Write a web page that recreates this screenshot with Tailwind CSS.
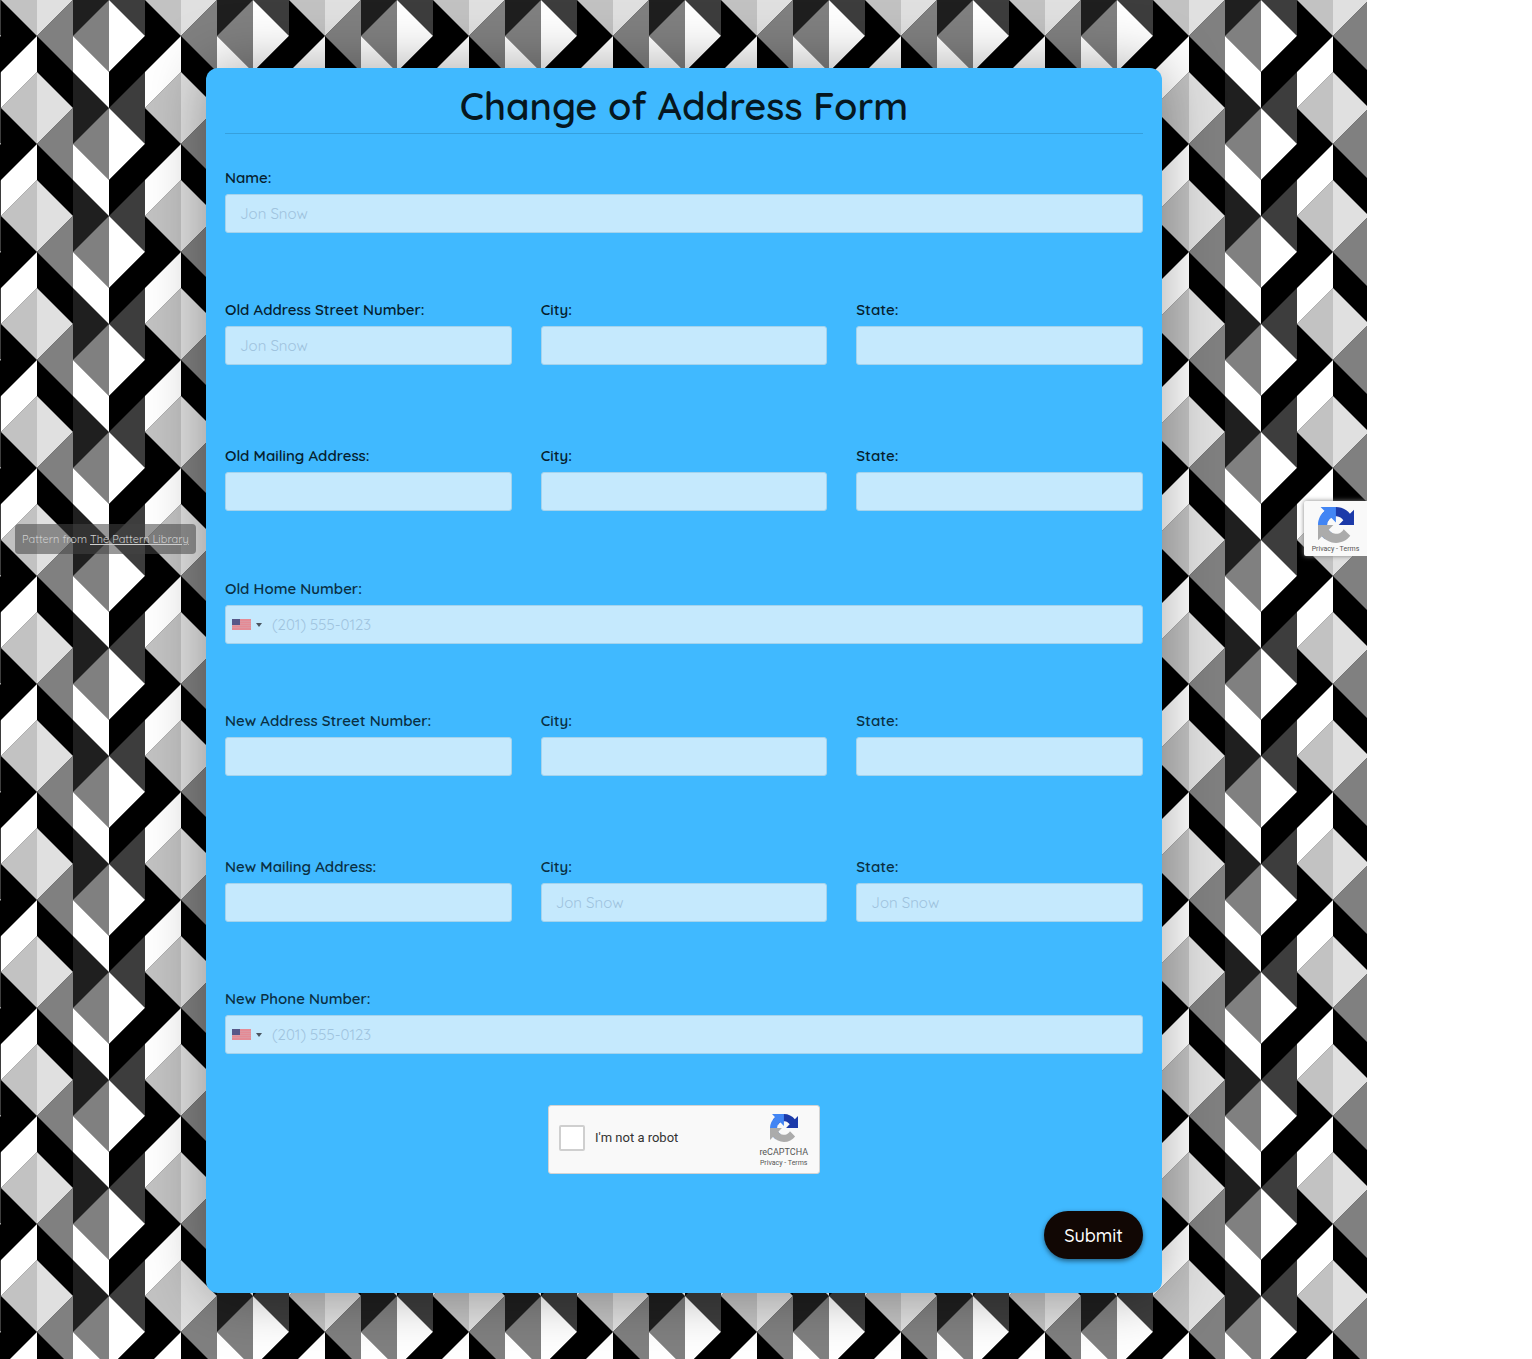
<!DOCTYPE html>
<html lang="en">
  <head>
    <meta charset="UTF-8" />
    <meta name="viewport" content="width=device-width, initial-scale=1.0" />
    <script src="https://cdn.jsdelivr.net/npm/@tailwindcss/browser@4"></script>
    <title>Change of Address Form</title>
  </head>
  <body class="bg-white font-[Quicksand,Lato,sans-serif] text-[#06202e]">
    <!-- Shared drawings -->
    <svg class="hidden" aria-hidden="true">
      <symbol id="recaptcha" viewBox="0 0 64 64">
        <path
          fill="#1c3aa9"
          d="M64 31.955l-.033-1.37V4.687l-7.16 7.16C50.948 4.674 42.033.093 32.05.093c-10.4 0-19.622 4.96-25.458 12.64l11.736 11.86a15.55 15.55 0 0 1 4.754-5.334c2.05-1.6 4.952-2.906 8.968-2.906.485 0 .86.057 1.135.163 4.976.393 9.288 3.14 11.828 7.124l-8.307 8.307L64 31.953"
        />
        <path
          fill="#4285f4"
          d="M31.862.094l-1.37.033H4.594l7.16 7.16C4.58 13.147 0 22.06 0 32.046c0 10.4 4.96 19.622 12.64 25.458L24.5 45.768a15.56 15.56 0 0 1-5.334-4.754c-1.6-2.05-2.906-4.952-2.906-8.968 0-.485.057-.86.163-1.135.393-4.976 3.14-9.288 7.124-11.828l8.307 8.307L31.86.095"
        />
        <path
          fill="#ababab"
          d="M.001 32.045l.033 1.37v25.898l7.16-7.16c5.86 7.173 14.774 11.754 24.76 11.754 10.4 0 19.622-4.96 25.458-12.64l-11.736-11.86a15.55 15.55 0 0 1-4.754 5.334c-2.05 1.6-4.952 2.906-8.968 2.906-.485 0-.86-.057-1.135-.163-4.976-.393-9.288-3.14-11.828-7.124l8.307-8.307c-10.522.04-22.4.066-27.295-.005"
        />
      </symbol>
      <symbol id="flag-us" viewBox="0 0 19 11">
        <path fill="#e48b95" d="M0 0h19v11H0z" />
        <path stroke="#dc9aa5" stroke-width=".8" d="M0 2.5h19M0 4.5h19M0 6.5h19M0 8.5h19" />
        <path fill="#585789" d="M0 0h8v6H0z" />
      </symbol>
    </svg>

    <div class="relative isolate mr-[165px] min-h-screen overflow-hidden pt-[68px] pb-[66px] pl-[206px] pr-[205px]">
      <!-- Background pattern -->
      <svg class="absolute inset-0 -z-10 h-full w-full" aria-hidden="true">
        <defs>
          <pattern id="chevrons" x="1" width="144" height="108" patternUnits="userSpaceOnUse">
            <path fill="#000" d="M0 0h73v108H0z" />
            <path fill="#c2c2c2" d="M0 0h36v36zM36 72v36H0z" />
            <path fill="#fff" d="M36 36v36L0 108V72z" />
            <path fill="#e0e0e0" d="M36 0h36L36 36zM36 72l36 36H36z" />
            <path fill="#808080" d="M72 0v72L36 36z" />
            <path fill="#1f1f1f" d="M72 0h37v108H72z" />
            <path fill="#808080" d="M108 0v72L72 36z" />
            <path fill="#fff" d="M72 36l36 36v36L72 72z" />
            <path fill="#3d3d3d" d="M108 0h36v108h-36z" />
            <path fill="#fff" d="M108 0l36 36-36 36z" />
            <path fill="#000" d="M144 36v36l-36 36V72z" />
          </pattern>
        </defs>
        <rect width="100%" height="100%" fill="url(#chevrons)" />
      </svg>

      <!-- Form card -->
      <form class="rounded-xl bg-[#40b9ff] px-[19px] pt-4 pb-[34px] shadow-[0_0_60px_rgba(0,0,0,0.36)]">
        <h1 class="border-b border-[#36a0dd] pb-[5px] text-center text-[38px]/[44px] font-semibold text-[#061720]">
          Change of Address Form
        </h1>

        <div class="mt-[33px]">
          <label for="name" class="mb-[5px] block text-[15px]/[22px] font-semibold">Name:</label>
          <input id="name" type="text" placeholder="Jon Snow" class="h-[39px] w-full rounded-[3px] border border-[#a5d3ec] bg-[#c5e9fd] px-[14px] text-[15px] placeholder:text-[#9fc3de]" />
        </div>

        <!-- Old address -->
        <div class="mt-[66px] grid grid-cols-3 gap-[29px]">
          <div>
            <label for="old-street" class="mb-[5px] block text-[15px]/[22px] font-semibold">Old Address Street Number:</label>
            <input id="old-street" type="text" placeholder="Jon Snow" class="h-[39px] w-full rounded-[3px] border border-[#a5d3ec] bg-[#c5e9fd] px-[14px] text-[15px] placeholder:text-[#9fc3de]" />
          </div>
          <div>
            <label for="old-city" class="mb-[5px] block text-[15px]/[22px] font-semibold">City:</label>
            <input id="old-city" type="text" class="h-[39px] w-full rounded-[3px] border border-[#a5d3ec] bg-[#c5e9fd] px-[14px] text-[15px]" />
          </div>
          <div>
            <label for="old-state" class="mb-[5px] block text-[15px]/[22px] font-semibold">State:</label>
            <input id="old-state" type="text" class="h-[39px] w-full rounded-[3px] border border-[#a5d3ec] bg-[#c5e9fd] px-[14px] text-[15px]" />
          </div>
        </div>

        <div class="mt-20 grid grid-cols-3 gap-[29px]">
          <div>
            <label for="old-mail" class="mb-[5px] block text-[15px]/[22px] font-semibold">Old Mailing Address:</label>
            <input id="old-mail" type="text" class="h-[39px] w-full rounded-[3px] border border-[#a5d3ec] bg-[#c5e9fd] px-[14px] text-[15px]" />
          </div>
          <div>
            <label for="old-mail-city" class="mb-[5px] block text-[15px]/[22px] font-semibold">City:</label>
            <input id="old-mail-city" type="text" class="h-[39px] w-full rounded-[3px] border border-[#a5d3ec] bg-[#c5e9fd] px-[14px] text-[15px]" />
          </div>
          <div>
            <label for="old-mail-state" class="mb-[5px] block text-[15px]/[22px] font-semibold">State:</label>
            <input id="old-mail-state" type="text" class="h-[39px] w-full rounded-[3px] border border-[#a5d3ec] bg-[#c5e9fd] px-[14px] text-[15px]" />
          </div>
        </div>

        <div class="mt-[67px]">
          <label for="old-phone" class="mb-[5px] block text-[15px]/[22px] font-semibold text-[#0a2f43]">Old Home Number:</label>
          <div class="relative">
            <input id="old-phone" type="tel" placeholder="(201) 555-0123" class="h-[39px] w-full rounded-[3px] border border-[#a5d3ec] bg-[#c5e9fd] pl-[46px] text-[15px] placeholder:text-[#9fc3de]" />
            <button type="button" aria-label="Country" class="absolute inset-y-0 left-0 flex items-center gap-[5px] pl-[7px]">
              <svg class="h-[11px] w-[19px]"><use href="#flag-us" /></svg>
              <svg class="h-1 w-[6px] fill-[#4a5560]" viewBox="0 0 6 4"><path d="M0 0h6L3 4z" /></svg>
            </button>
          </div>
        </div>

        <!-- New address -->
        <div class="mt-[66px] grid grid-cols-3 gap-[29px] text-[#0a2f43]">
          <div>
            <label for="new-street" class="mb-[5px] block text-[15px]/[22px] font-semibold">New Address Street Number:</label>
            <input id="new-street" type="text" class="h-[39px] w-full rounded-[3px] border border-[#a5d3ec] bg-[#c5e9fd] px-[14px] text-[15px]" />
          </div>
          <div>
            <label for="new-city" class="mb-[5px] block text-[15px]/[22px] font-semibold">City:</label>
            <input id="new-city" type="text" class="h-[39px] w-full rounded-[3px] border border-[#a5d3ec] bg-[#c5e9fd] px-[14px] text-[15px]" />
          </div>
          <div>
            <label for="new-state" class="mb-[5px] block text-[15px]/[22px] font-semibold">State:</label>
            <input id="new-state" type="text" class="h-[39px] w-full rounded-[3px] border border-[#a5d3ec] bg-[#c5e9fd] px-[14px] text-[15px]" />
          </div>
        </div>

        <div class="mt-20 grid grid-cols-3 gap-[29px] text-[#0a2f43]">
          <div>
            <label for="new-mail" class="mb-[5px] block text-[15px]/[22px] font-semibold">New Mailing Address:</label>
            <input id="new-mail" type="text" class="h-[39px] w-full rounded-[3px] border border-[#a5d3ec] bg-[#c5e9fd] px-[14px] text-[15px]" />
          </div>
          <div>
            <label for="new-mail-city" class="mb-[5px] block text-[15px]/[22px] font-semibold">City:</label>
            <input id="new-mail-city" type="text" placeholder="Jon Snow" class="h-[39px] w-full rounded-[3px] border border-[#a5d3ec] bg-[#c5e9fd] px-[14px] text-[15px] placeholder:text-[#9fc3de]" />
          </div>
          <div>
            <label for="new-mail-state" class="mb-[5px] block text-[15px]/[22px] font-semibold">State:</label>
            <input id="new-mail-state" type="text" placeholder="Jon Snow" class="h-[39px] w-full rounded-[3px] border border-[#a5d3ec] bg-[#c5e9fd] px-[14px] text-[15px] placeholder:text-[#9fc3de]" />
          </div>
        </div>

        <div class="mt-[66px]">
          <label for="new-phone" class="mb-[5px] block text-[15px]/[22px] font-semibold text-[#0a2f43]">New Phone Number:</label>
          <div class="relative">
            <input id="new-phone" type="tel" placeholder="(201) 555-0123" class="h-[39px] w-full rounded-[3px] border border-[#a5d3ec] bg-[#c5e9fd] pl-[46px] text-[15px] placeholder:text-[#9fc3de]" />
            <button type="button" aria-label="Country" class="absolute inset-y-0 left-0 flex items-center gap-[5px] pl-[7px]">
              <svg class="h-[11px] w-[19px]"><use href="#flag-us" /></svg>
              <svg class="h-1 w-[6px] fill-[#4a5560]" viewBox="0 0 6 4"><path d="M0 0h6L3 4z" /></svg>
            </button>
          </div>
        </div>

        <!-- Captcha -->
        <div class="mx-auto mt-[51px] flex h-[69px] w-[272px] rounded-[3px] border border-[#d3d3d3] bg-[#f9f9f9] pt-2 pr-[11px] pl-[10px] font-[Roboto,sans-serif] text-[#333]">
          <input id="robot" type="checkbox" class="mt-[11px] h-[26px] w-[26px] appearance-none rounded-[2px] border-2 border-[#cfcfcf] bg-white" />
          <label for="robot" class="mt-[11px] ml-[10px] flex-1 text-[13px]/[26px]">I'm not a robot</label>
          <div class="flex flex-col items-center text-[#555]">
            <svg class="h-7 w-7"><use href="#recaptcha" /></svg>
            <span class="mt-[5px] text-[9px]/[11px]">reCAPTCHA</span>
            <span class="text-[7px]/[10px]"><a href="#">Privacy</a> - <a href="#">Terms</a></span>
          </div>
        </div>

        <div class="mt-[37px] flex justify-end">
          <button type="submit" class="h-12 w-[99px] rounded-full bg-[#110704] text-[18px] font-medium text-white shadow-[0_2px_5px_rgba(0,0,0,0.5)]">Submit</button>
        </div>
      </form>

      <!-- Pattern credit -->
      <p class="absolute top-[524px] left-[15px] rounded-[4px] bg-[#444444]/55 px-[7px] text-[11px]/[30px] text-[#cfcfcf]">
        Pattern from <a href="#" class="underline">The Pattern Library</a>
      </p>

      <!-- reCAPTCHA badge -->
      <div class="absolute top-[501px] right-0 flex h-[55px] w-[63px] flex-col items-center rounded-l-[2px] bg-[#f9f9f9] pt-[6px] font-[Roboto,sans-serif] text-[#555] shadow-[0_0_5px_gray]">
        <svg class="h-9 w-9"><use href="#recaptcha" /></svg>
        <span class="mt-[1px] text-[7px]/[10px]"><a href="#">Privacy</a> - <a href="#">Terms</a></span>
      </div>
    </div>
  </body>
</html>
